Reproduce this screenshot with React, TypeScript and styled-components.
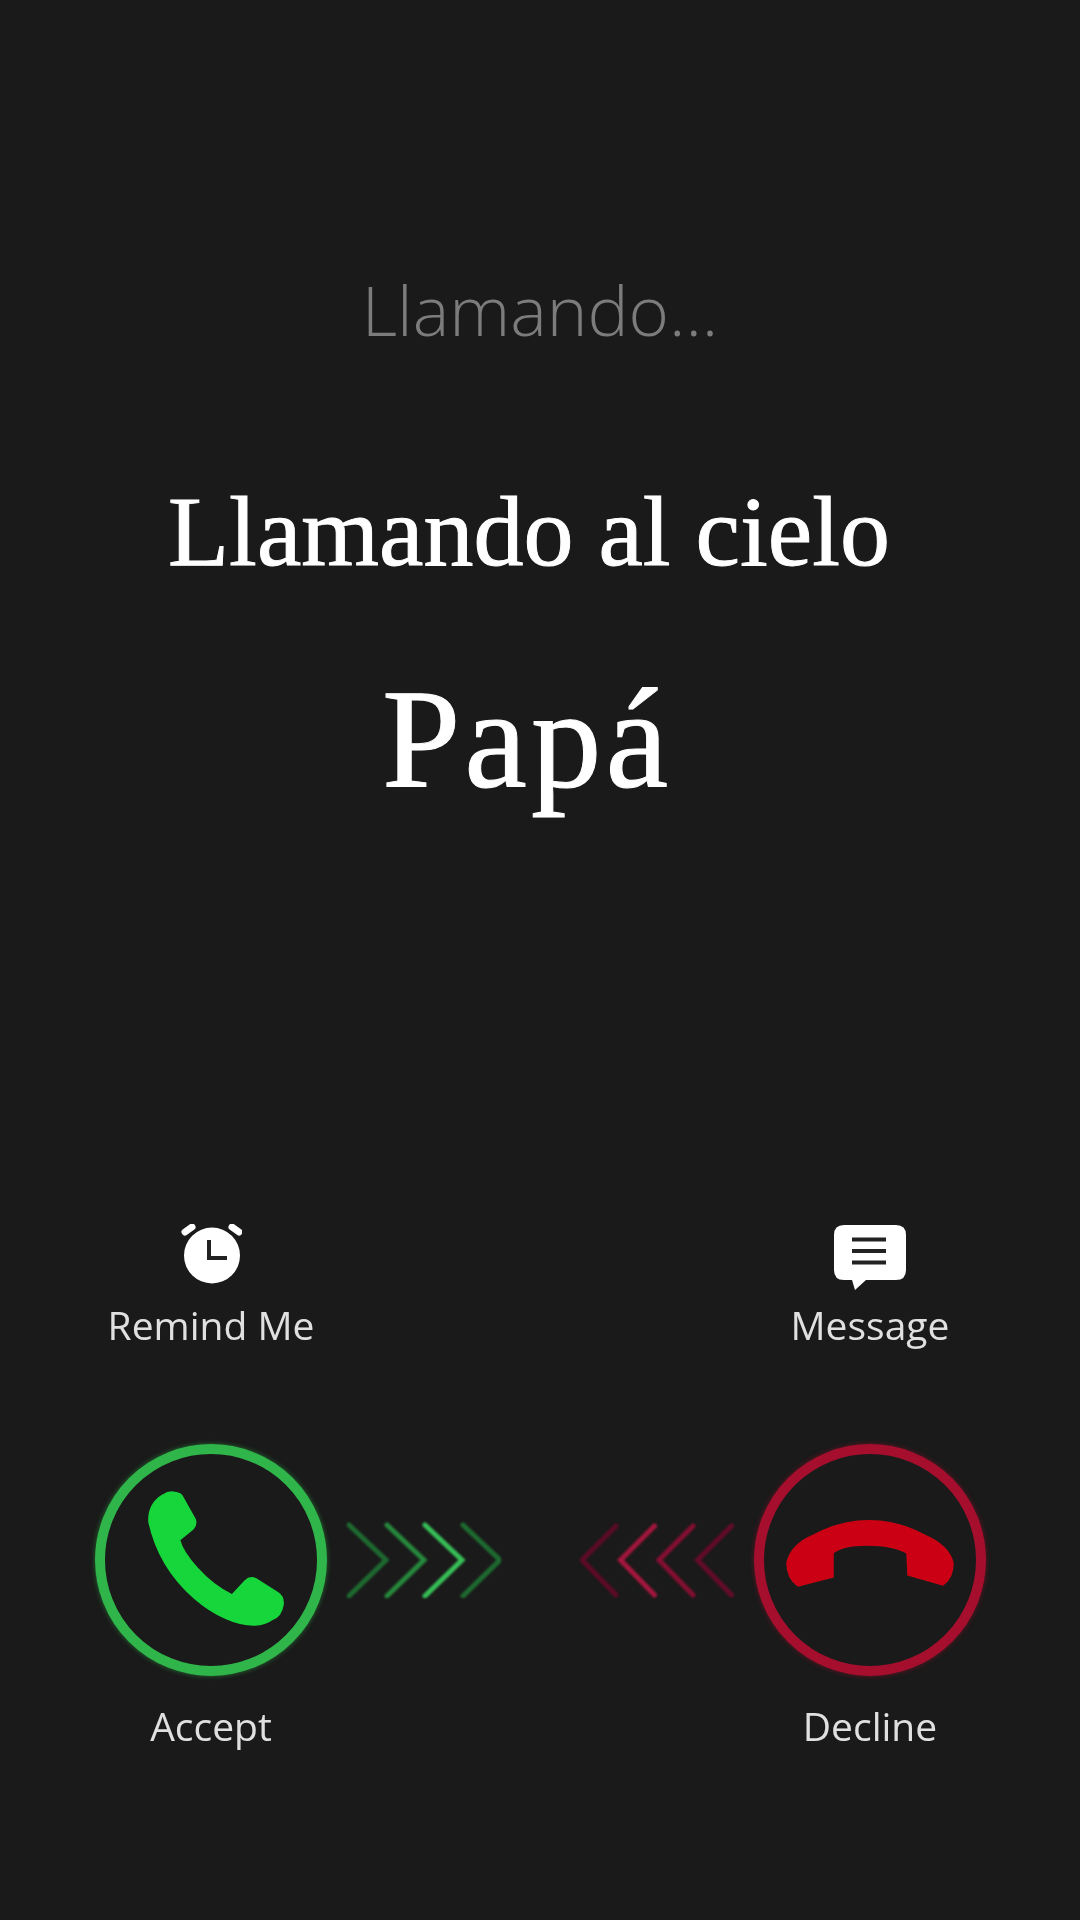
import React from 'react';
import styled, { createGlobalStyle } from 'styled-components';

const GlobalStyle = createGlobalStyle`
  html, body {
    margin: 0;
    padding: 0;
    background: #1a1a1a;
  }
`;

const Screen = styled.div`
  width: 1080px;
  height: 1920px;
  overflow: hidden;
  background: #1a1a1a;
  display: flex;
  flex-direction: column;
`;

const Header = styled.header`
  display: flex;
  flex-direction: column;
  align-items: center;
  padding-top: 269px;
`;

const Status = styled.div`
  font-family: 'Open Sans', sans-serif;
  font-weight: 300;
  font-size: 69px;
  line-height: 80px;
  color: #7c7c7c;
`;

const Title = styled.h1`
  margin: 128px 22px 0 0;
  font-family: 'Liberation Serif', serif;
  font-weight: 400;
  font-size: 100px;
  line-height: 110px;
  color: #fff;
  -webkit-text-stroke: 1px #fff;
`;

const Name = styled.h2`
  margin: 77px 26px 0 0;
  font-family: 'Liberation Serif', serif;
  font-weight: 400;
  font-size: 141px;
  line-height: 150px;
  letter-spacing: 4px;
  color: #fff;
  -webkit-text-stroke: 1px #fff;
`;

const Row = styled.div`
  display: flex;
  justify-content: space-between;
  padding: 0 94px 0 95px;
`;

const ActionsRow = styled(Row)`
  margin-top: 410px;
`;

const Action = styled.div`
  width: 232px;
  display: flex;
  flex-direction: column;
  align-items: center;
`;

const ActionIcon = styled.div`
  height: 66px;
  margin-bottom: 13px;
  display: flex;
  align-items: flex-start;
  color: #fff;
  filter: blur(0.5px);
`;

const Label = styled.span`
  font-family: 'Open Sans', sans-serif;
  font-size: 39px;
  font-weight: 500;
  line-height: 44px;
  white-space: nowrap;
  color: #e0e0e0;
  filter: blur(0.4px);
`;

const CallRow = styled(Row)`
  margin-top: 97px;
`;

const CallGroup = styled.div`
  display: flex;
  align-items: center;
  gap: 20px;
`;

const Ring = styled.div<{ $color: string }>`
  width: 232px;
  height: 232px;
  box-sizing: border-box;
  border-radius: 50%;
  border: 10px solid ${p => p.$color};
  box-shadow: 0 0 5px ${p => p.$color}88;
  position: relative;
`;

const RingGlyph = styled.svg`
  position: absolute;
  inset: -10px;
  width: 232px;
  height: 232px;
  filter: blur(0.7px);
`;

const Chevrons = styled.svg`
  width: 154px;
  height: 76px;
  filter: blur(1.2px);
`;

const LabelsRow = styled(Row)`
  margin-top: 28px;
`;

const LabelSlot = styled.div`
  width: 232px;
  display: flex;
  justify-content: center;
`;

const AlarmIcon = () => (
  <svg width="62" height="62" viewBox="8 9 62 62">
    <circle cx="40" cy="40.5" r="28" fill="currentColor" />
    <path d="M13 17 L20 12" stroke="currentColor" strokeWidth="7" strokeLinecap="round" />
    <path d="M67 17 L60 12" stroke="currentColor" strokeWidth="7" strokeLinecap="round" />
    <path d="M37 25 V43 H55" fill="none" stroke="#222" strokeWidth="4" />
  </svg>
);

const MessageIcon = () => (
  <svg width="74" height="66" viewBox="9 9 74 66">
    <path
      d="M20 10 H72 Q82 10 82 20 V55 Q82 65 72 65 H42 L31 75 L28 65 H20 Q10 65 10 55 V20 Q10 10 20 10 Z"
      fill="currentColor"
    />
    <path d="M28 24.5 H62 M28 36 H62 M28 47.5 H62" stroke="#222" strokeWidth="4" />
  </svg>
);

const AcceptPhone = () => (
  <RingGlyph viewBox="0 0 232 232">
    <path
      d="M68 51 Q74 47 80 48.5 Q85 49 87 52 L100 75 Q102 81 98 85 L84.5 96 C88 110 110 138 137 151 L150 137 Q155 132 161 135 L183 149 Q189 153 188 161 Q186 172 178 175 Q170 181 160 181 C125 182 68 142 54 78 Q53 60 68 51 Z"
      fill="#16d63c"
      stroke="#16d63c"
      strokeWidth="1.5"
    />
  </RingGlyph>
);

const DeclinePhone = () => (
  <RingGlyph viewBox="0 0 232 232">
    <path
      d="M33 119 C36 105 48 96 60 91 C95 72 135 72 170 91 C184 97 196 106 199 119 Q199 134 189 141 L154 131 L153 109 Q139 101 113 101 Q88 101 79 109 L79 133 L44 142 Q33 134 33 119 Z"
      fill="#cc0014"
      stroke="#cc0014"
      strokeWidth="1.5"
    />
  </RingGlyph>
);

const greenShades = ['#1e6b30', '#26893c', '#37c057', '#1e6b30'];
const redShades = ['#5e0b26', '#a5173d', '#850f32', '#650c2a'];

const ChevronStrip: React.FC<{ shades: string[]; flip?: boolean }> = ({ shades, flip }) => (
  <Chevrons viewBox="0 0 154 76">
    {shades.map((shade, i) => {
      const d = flip
        ? `M${36 + i * 38.5} 4 L${2 + i * 38.5} 38 L${36 + i * 38.5} 73`
        : `M${2 + i * 38} 3 L${39 + i * 38} 38 L${2 + i * 38} 74`;
      return <path key={i} d={d} fill="none" stroke={shade} strokeWidth="5" strokeLinecap="round" />;
    })}
  </Chevrons>
);

export default function App() {
  return (
    <>
      <GlobalStyle />
      <Screen>
        <Header>
          <Status>Llamando...</Status>
          <Title>Llamando al cielo</Title>
          <Name>Papá</Name>
        </Header>

        <ActionsRow>
          <Action>
            <ActionIcon>
              <AlarmIcon />
            </ActionIcon>
            <Label>Remind Me</Label>
          </Action>
          <Action>
            <ActionIcon>
              <MessageIcon />
            </ActionIcon>
            <Label>Message</Label>
          </Action>
        </ActionsRow>

        <CallRow>
          <CallGroup>
            <Ring $color="#2fb54a">
              <AcceptPhone />
            </Ring>
            <ChevronStrip shades={greenShades} />
          </CallGroup>
          <CallGroup>
            <ChevronStrip shades={redShades} flip />
            <Ring $color="#a50f2d">
              <DeclinePhone />
            </Ring>
          </CallGroup>
        </CallRow>

        <LabelsRow>
          <LabelSlot>
            <Label>Accept</Label>
          </LabelSlot>
          <LabelSlot>
            <Label>Decline</Label>
          </LabelSlot>
        </LabelsRow>
      </Screen>
    </>
  );
}
